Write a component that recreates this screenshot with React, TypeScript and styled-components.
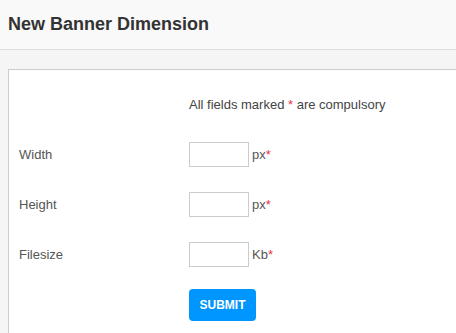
import React from "react";
import styled, { createGlobalStyle } from "styled-components";

const Global = createGlobalStyle`
  html, body { margin: 0; padding: 0; }
  body {
    background: #f5f5f5;
    font-family: "Liberation Sans", Arial, sans-serif;
    overflow: hidden;
  }
`;

const Page = styled.div`
  width: 456px;
  height: 333px;
  overflow: hidden;
`;

const Header = styled.header`
  height: 49px;
  background: #f9f9f9;
  border-bottom: 1px solid #dddddd;
  display: flex;
  align-items: center;
  padding-left: 8px;
`;

const Title = styled.h1`
  margin: 0;
  font-size: 18px;
  font-weight: bold;
  color: #333333;
  line-height: 20px;
  padding-bottom: 2px;
`;

const Main = styled.main`
  padding: 19px 0 0 8px;
`;

const Panel = styled.section`
  background: #ffffff;
  border: 1px solid #cccccc;
  border-right: none;
  height: 300px;
  padding: 25px 0 0 10px;
  display: flex;
  flex-direction: column;
`;

const Intro = styled.p`
  margin: 0 0 27px 170px;
  font-size: 13px;
  line-height: 20px;
  color: #444444;
`;

const Star = styled.span`
  color: #e8333f;
`;

const Row = styled.div<{ $last?: boolean }>`
  display: grid;
  grid-template-columns: 170px auto;
  align-items: center;
  height: 25px;
  margin-bottom: ${(p) => (p.$last ? "22px" : "25px")};
`;

const Label = styled.label`
  font-size: 13px;
  color: #555555;
`;

const Field = styled.div`
  display: flex;
  align-items: center;
  gap: 3px;
`;

const Input = styled.input`
  box-sizing: border-box;
  width: 60px;
  height: 25px;
  border: 1px solid #cccccc;
  margin: 0;
  padding: 2px 4px;
  font-family: inherit;
  font-size: 13px;
  outline: none;
`;

const Unit = styled.span`
  font-size: 13px;
  color: #555555;
`;

const ButtonRow = styled.div`
  padding-left: 170px;
`;

const Submit = styled.button`
  width: 67px;
  height: 32px;
  border: none;
  border-radius: 4px;
  background: #0096ff;
  color: #ffffff;
  font-family: inherit;
  font-size: 12px;
  font-weight: bold;
  padding: 0;
  cursor: pointer;
`;

const fields = [
  { label: "Width", unit: "px" },
  { label: "Height", unit: "px" },
  { label: "Filesize", unit: "Kb" },
];

export default function App() {
  return (
    <Page>
      <Global />
      <Header>
        <Title>New Banner Dimension</Title>
      </Header>
      <Main>
        <Panel>
          <Intro>
            All fields marked <Star>*</Star> are compulsory
          </Intro>
          {fields.map((f, i) => (
            <Row key={f.label} $last={i === fields.length - 1}>
              <Label>{f.label}</Label>
              <Field>
                <Input type="text" />
                <Unit>
                  {f.unit}
                  <Star>*</Star>
                </Unit>
              </Field>
            </Row>
          ))}
          <ButtonRow>
            <Submit type="button">SUBMIT</Submit>
          </ButtonRow>
        </Panel>
      </Main>
    </Page>
  );
}
